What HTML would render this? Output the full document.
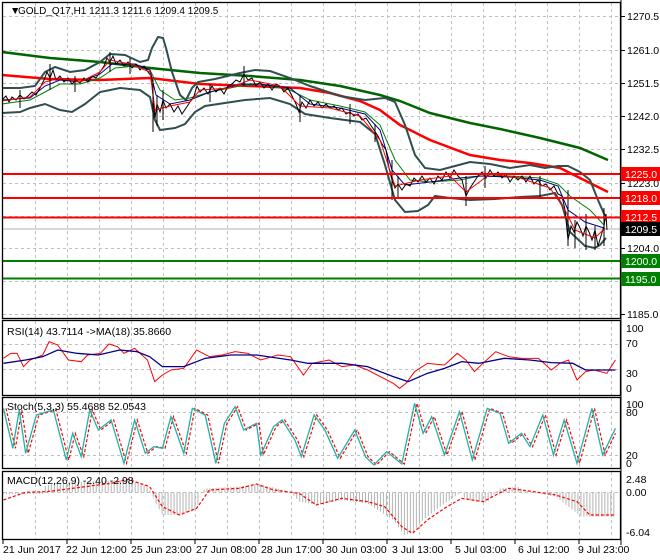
<!DOCTYPE html>
<html><head><meta charset="utf-8"><style>
html,body{margin:0;padding:0;background:#fff;width:660px;height:560px;overflow:hidden}
svg{display:block}
text{font-family:"Liberation Sans",sans-serif;font-size:10.5px;fill:#000}
.ns{vector-effect:non-scaling-stroke}
</style></head><body>
<svg width="660" height="560" viewBox="0 0 660 560" xmlns="http://www.w3.org/2000/svg">
<defs>
<pattern id="hs" width="7" height="10" patternUnits="userSpaceOnUse"><rect width="2.4" height="10" fill="#b4b4b4"/></pattern>
</defs>
<g stroke="#c0c0c0" stroke-dasharray="3,3" stroke-width="1" fill="none">
<path d="M35.5,3V318M67.5,3V318M99.5,3V318M131.5,3V318M163.5,3V318M195.5,3V318M227.5,3V318M259.5,3V318M291.5,3V318M323.5,3V318M355.5,3V318M387.5,3V318M419.5,3V318M451.5,3V318M483.5,3V318M515.5,3V318M547.5,3V318M579.5,3V318M611.5,3V318"/>
<path d="M3,16.5H621M3,50.5H621M3,83.5H621M3,116.5H621M3,149.5H621M3,183.5H621M3,216.5H621M3,248.5H621M3,281.5H621M3,314.5H621"/>
<path d="M35.5,321V395M67.5,321V395M99.5,321V395M131.5,321V395M163.5,321V395M195.5,321V395M227.5,321V395M259.5,321V395M291.5,321V395M323.5,321V395M355.5,321V395M387.5,321V395M419.5,321V395M451.5,321V395M483.5,321V395M515.5,321V395M547.5,321V395M579.5,321V395M611.5,321V395"/>
<path d="M3,344.5H621M3,369.5H621"/>
<path d="M35.5,398V468M67.5,398V468M99.5,398V468M131.5,398V468M163.5,398V468M195.5,398V468M227.5,398V468M259.5,398V468M291.5,398V468M323.5,398V468M355.5,398V468M387.5,398V468M419.5,398V468M451.5,398V468M483.5,398V468M515.5,398V468M547.5,398V468M579.5,398V468M611.5,398V468"/>
<path d="M3,412.5H621M3,455.5H621"/>
<path d="M35.5,472V539M67.5,472V539M99.5,472V539M131.5,472V539M163.5,472V539M195.5,472V539M227.5,472V539M259.5,472V539M291.5,472V539M323.5,472V539M355.5,472V539M387.5,472V539M419.5,472V539M451.5,472V539M483.5,472V539M515.5,472V539M547.5,472V539M579.5,472V539M611.5,472V539"/>
<path d="M3,492.5H621"/>
</g>
<line x1="3" y1="229" x2="621" y2="229" stroke="#b0b0b0"/>
<polyline fill="none" stroke="#006400" stroke-width="2.5" points="2,52 50,58 100,62 150,68 200,73 250,76 300,80 340,86 380,95 400,101 430,113 470,123 500,129 540,138 580,148 608,160"/>
<polyline fill="none" stroke="#ff0000" stroke-width="2.5" points="2,75 50,79 100,80 150,78 200,84 250,86 300,88 330,93 360,101 380,110 400,125 430,140 470,155 500,160 530,163 560,168 580,178 608,192"/>
<polyline fill="none" stroke="#2f4f4f" stroke-width="2" points="2,88 20,88 35,86 45,72 55,67 70,72 85,70 100,62 110,54 125,55 140,62 148,60 152,48 158,37 163,38 166,48 172,72 180,95 186,100 192,88 198,82 215,79 240,73 255,70 270,71 290,78 310,86 340,96 365,100 385,98 395,102 405,125 415,155 425,168 440,170 455,166 470,162 490,164 510,168 530,165 545,168 558,166 568,166 580,172 590,180 598,200 605,216"/>
<polyline fill="none" stroke="#2f4f4f" stroke-width="2" points="2,113 20,112 30,108 45,104 60,110 72,112 85,104 100,92 120,88 140,90 150,97 155,120 160,130 175,128 185,124 195,112 205,106 225,103 245,100 270,98 290,104 305,114 330,118 360,122 375,134 385,165 395,200 405,212 418,211 428,205 435,196 450,198 470,200 495,199 520,197 540,196 555,193 562,205 570,232 585,246 595,248 600,245 606,238"/>
<polyline fill="none" stroke="#008000" stroke-width="1" points="2,104 30,100 45,92 60,84 80,84 100,78 115,68 135,66 150,70 160,90 175,100 190,98 210,92 240,86 260,84 290,90 310,100 340,106 365,112 380,125 395,160 410,180 430,182 460,180 480,176 510,176 540,178 558,184 570,196 590,210 604,225"/>
<polyline fill="none" stroke="#00008b" stroke-width="1" points="2,100 30,98 45,86 60,80 80,82 100,74 112,64 135,64 150,70 156,95 170,104 190,100 210,92 240,84 260,84 290,88 310,104 340,108 365,114 380,130 392,170 405,185 430,182 460,178 480,176 510,177 540,180 558,186 568,210 585,222 604,228"/>
<polyline fill="none" stroke="#000" stroke-width="1" points="2,100 6,96 9,102 12,97 16,100 20,95 24,99 28,96 32,92 36,95 40,88 44,80 47,72 50,78 53,70 56,80 60,76 64,82 68,78 72,84 76,80 80,83 84,78 88,82 92,76 96,78 100,72 104,66 107,58 110,62 113,56 116,64 120,60 124,66 128,62 132,68 136,64 140,70 144,66 148,72 151,76 153,95 155,118 157,104 160,112 163,100 166,108 170,104 174,112 178,106 182,114 186,108 190,102 194,96 197,86 200,92 204,88 208,94 212,86 216,92 220,88 224,94 228,86 232,84 236,80 240,82 244,74 248,80 252,78 256,86 260,82 264,88 268,84 272,90 276,84 280,86 284,92 288,88 292,96 296,104 299,112 302,102 306,108 310,100 314,106 318,102 322,108 326,104 330,108 334,106 338,110 342,108 346,114 350,112 354,116 358,114 362,120 366,118 370,124 374,130 378,136 382,144 386,150 389,168 392,180 395,188 398,184 402,190 406,184 410,186 414,178 418,182 422,176 426,182 430,178 434,184 438,176 442,180 446,172 450,178 454,170 458,176 462,180 466,196 470,188 474,182 478,176 482,172 486,178 490,170 494,176 498,172 502,178 506,174 510,182 514,176 518,180 522,176 526,182 530,176 534,184 538,180 542,186 546,184 550,190 554,186 558,194 562,196 565,210 568,240 571,226 574,232 577,222 580,228 583,236 586,226 589,232 592,240 595,230 598,246 601,236 604,226 606,214 607,230"/>
<polyline fill="none" stroke="#ff0000" stroke-width="1" points="2,101 30,97 45,82 60,78 80,82 100,72 110,60 130,64 150,72 155,110 170,106 190,102 200,90 230,88 250,80 280,86 300,106 330,108 360,116 380,140 395,186 420,180 450,176 466,192 490,174 520,178 550,188 565,210 575,230 595,238 605,228"/>
<path fill="none" stroke="#000" stroke-width="1" d="M153,80V132M157,95V126M163,90V120M110,52V72M50,64V90M244,66V86M392,160V200M398,176V198M568,190V246M586,214V250M604,208V246M300,96V122M466,176V206M485,166V188M540,176V198M20,90V108M75,76V92M130,58V74M210,84V102M350,104V124M375,124V142M575,220V248M595,226V250"/>
<g stroke-width="2" fill="none">
<line x1="3" y1="174" x2="621" y2="174" stroke="#ff0000"/>
<line x1="3" y1="198" x2="621" y2="198" stroke="#ff0000"/>
<line x1="3" y1="217.5" x2="621" y2="217.5" stroke="#ff0000"/>
<line x1="3" y1="261" x2="621" y2="261" stroke="#008000"/>
<line x1="3" y1="278.5" x2="621" y2="278.5" stroke="#008000"/>
</g>
<g transform="translate(0,320) scale(0.4274,0.3333)">
<polyline class="ns" fill="none" stroke="#ff0000" stroke-width="1" points="8,115 25,100 40,100 55,140 70,120 100,105 115,65 135,75 160,120 190,125 205,105 235,100 255,72 275,80 290,100 315,85 345,120 362,185 380,165 400,150 430,145 460,90 490,110 520,105 550,95 580,100 610,120 650,105 680,110 710,165 730,130 770,120 800,140 830,135 860,150 890,170 920,190 935,205 950,190 970,155 1000,130 1040,135 1070,100 1090,120 1110,155 1130,130 1160,95 1190,110 1220,115 1260,115 1290,150 1310,130 1330,120 1350,180 1370,155 1390,150 1420,160 1440,120"/>
<polyline class="ns" fill="none" stroke="#00008b" stroke-width="1.3" points="8,130 60,120 100,110 135,90 180,100 230,105 280,90 320,95 350,110 380,140 430,140 480,115 540,105 600,105 680,120 720,130 800,130 860,140 920,170 955,185 1000,160 1040,145 1080,125 1120,130 1180,115 1240,120 1290,128 1340,130 1370,150 1440,150"/>
</g>
<g transform="translate(0,320) scale(0.4274,0.3333)">
<polyline class="ns" fill="none" stroke="#ff0000" stroke-width="1.2" stroke-dasharray="3,2" points="14,265 36,385 51,270 66,400 91,285 131,270 161,420 176,340 196,410 216,270 236,330 266,300 296,430 321,300 346,400 366,380 386,385 406,290 436,400 456,265 486,285 511,430 531,310 556,260 576,330 606,310 616,405 646,320 666,300 696,360 711,410 741,285 766,330 796,415 836,330 861,410 881,435 911,395 946,432 976,250 996,340 1016,290 1046,405 1081,275 1111,420 1146,265 1176,280 1196,370 1226,340 1246,380 1276,285 1301,405 1326,300 1356,430 1391,265 1416,405 1440,340"/>
<polyline class="ns" fill="none" stroke="#20b2aa" stroke-width="1.3" points="8,265 30,385 45,270 60,400 85,285 125,270 155,420 170,340 190,410 210,270 230,330 260,300 290,430 315,300 340,400 360,380 380,385 400,290 430,400 450,265 480,285 505,430 525,310 550,260 570,330 600,310 610,405 640,320 660,300 690,360 705,410 735,285 760,330 790,415 830,330 855,410 875,435 905,395 940,432 970,250 990,340 1010,290 1040,405 1075,275 1105,420 1140,265 1170,280 1190,370 1220,340 1240,380 1270,285 1295,405 1320,300 1350,430 1385,265 1410,405 1440,325"/>
</g>
<g transform="translate(0,320) scale(0.4274,0.3333)">
<polygon fill="url(#hs)" points="8,517 8,522 100,522 100,500 130,490 200,485 300,480 340,495 355,517 360,540 380,585 420,585 460,570 470,517 480,505 560,500 600,492 650,505 680,517 700,545 740,555 800,540 860,550 920,600 945,645 965,640 990,600 1030,560 1070,525 1080,517 1090,540 1140,548 1160,517 1170,505 1210,500 1240,517 1300,530 1360,590 1440,590 1440,517"/>
<polyline class="ns" fill="none" stroke="#ff0000" stroke-width="1.2" stroke-dasharray="3,2" points="8,540 60,517 110,515 200,500 260,490 300,478 350,500 380,560 420,585 460,565 490,510 560,505 600,492 640,510 700,520 740,555 800,535 860,545 900,560 940,620 965,640 1000,600 1040,565 1080,535 1130,545 1190,505 1220,510 1260,517 1300,525 1350,545 1380,585 1440,585"/>
</g>
<g fill="none" stroke="#000" stroke-width="1.3">
<rect x="2.5" y="2.5" width="618" height="316"/>
<rect x="2.5" y="320.5" width="618" height="75"/>
<rect x="2.5" y="397.5" width="618" height="71"/>
<rect x="2.5" y="471.5" width="618" height="68"/>
</g>
<line x1="621" y1="0" x2="621" y2="545" stroke="#000"/>
<g stroke="#000"><path d="M621,16.5h4M621,50.5h4M621,83.5h4M621,116.5h4M621,149.5h4M621,183.5h4M621,248.5h4M621,314.5h4M3,540v4M67,540v4M131,540v4M195,540v4M259,540v4M323,540v4M387,540v4M451,540v4M515,540v4M579,540v4"/></g>
<text x="10" y="14">&#9660;</text>
<text x="18" y="14" style="font-size:10px">GOLD_Q17,H1  1211.3 1211.6 1209.4 1209.5</text>
<g>
<text x="627" y="20">1270.5</text><text x="627" y="54">1261.0</text><text x="627" y="87">1251.5</text><text x="627" y="120">1242.0</text><text x="627" y="153">1232.5</text><text x="627" y="187">1223.0</text><text x="627" y="252">1204.0</text><text x="627" y="318">1185.0</text>
</g>
<rect x="621" y="167" width="39" height="14" fill="#ff0000"/><text x="625" y="178" style="fill:#fff">1225.0</text>
<rect x="621" y="191" width="39" height="14" fill="#ff0000"/><text x="625" y="202" style="fill:#fff">1218.0</text>
<rect x="621" y="210" width="39" height="14" fill="#ff0000"/><text x="625" y="221" style="fill:#fff">1212.5</text>
<rect x="621" y="222" width="39" height="14" fill="#000"/><text x="625" y="233" style="fill:#fff">1209.5</text>
<rect x="621" y="254" width="39" height="14" fill="#008000"/><text x="625" y="265" style="fill:#fff">1200.0</text>
<rect x="621" y="272" width="39" height="14" fill="#008000"/><text x="625" y="283" style="fill:#fff">1195.0</text>
<text x="7" y="335">RSI(14) 43.7114  -&gt;MA(18) 35.8660</text>
<text x="626" y="332">100</text><text x="626" y="347">70</text><text x="626" y="377">30</text><text x="626" y="392">0</text>
<text x="7" y="410">Stoch(5,3,3) 55.4688 52.0543</text>
<text x="626" y="408">100</text><text x="626" y="416">80</text><text x="626" y="459">20</text><text x="626" y="467">0</text>
<text x="7" y="484">MACD(12,26,9) -2.40 -2.98</text>
<text x="626" y="483">2.48</text><text x="626" y="496">0.00</text><text x="626" y="536">-6.04</text>
<text x="3" y="553">21 Jun 2017</text><text x="66" y="553">22 Jun 12:00</text><text x="131" y="553">25 Jun 23:00</text><text x="196" y="553">27 Jun 08:00</text><text x="261" y="553">28 Jun 17:00</text><text x="326" y="553">30 Jun 03:00</text><text x="392" y="553">3 Jul 13:00</text><text x="455" y="553">5 Jul 03:00</text><text x="518" y="553">6 Jul 12:00</text><text x="578" y="553">9 Jul 23:00</text>
</svg>
</body></html>
